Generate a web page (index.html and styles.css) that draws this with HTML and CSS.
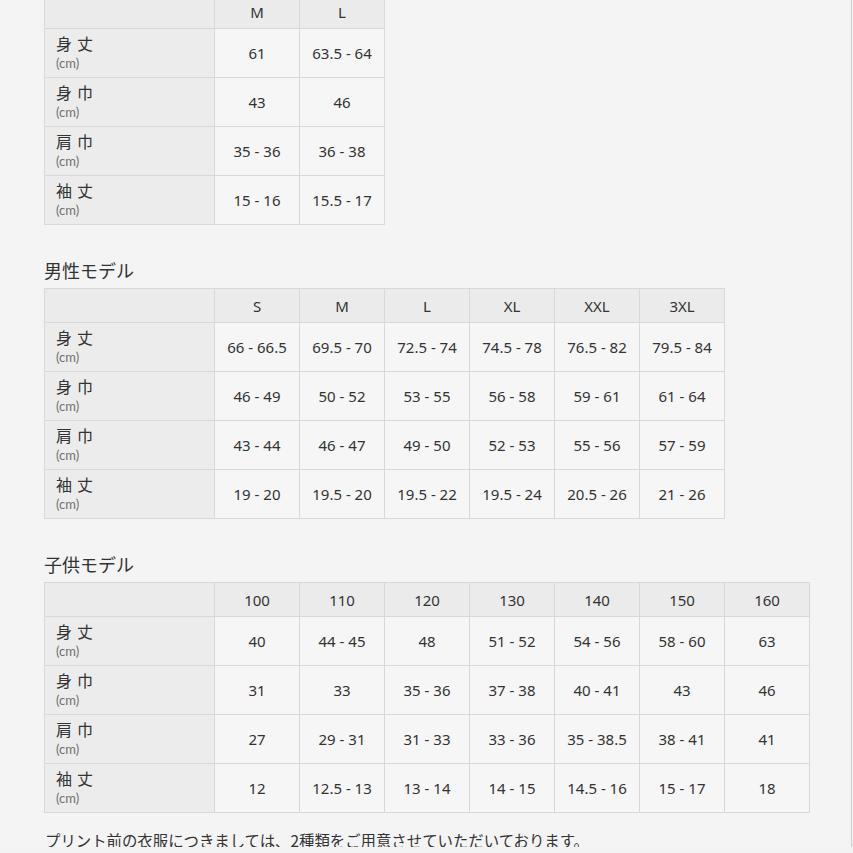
FILE: index.html
```html
<!DOCTYPE html>
<html lang="ja">
<head>
<meta charset="utf-8">
<link rel="stylesheet" href="styles.css">
</head>
<body>
<div class="page">
  <section class="sec sec-first">
    <div class="grid cols-2">
      <div class="hd"></div><div class="hd">M</div><div class="hd">L</div>
      <div class="lb"><span class="jp">身 丈</span><span class="cm">(cm)</span></div><div class="c">61</div><div class="c">63.5 - 64</div>
      <div class="lb"><span class="jp">身 巾</span><span class="cm">(cm)</span></div><div class="c">43</div><div class="c">46</div>
      <div class="lb"><span class="jp">肩 巾</span><span class="cm">(cm)</span></div><div class="c">35 - 36</div><div class="c">36 - 38</div>
      <div class="lb"><span class="jp">袖 丈</span><span class="cm">(cm)</span></div><div class="c">15 - 16</div><div class="c">15.5 - 17</div>
    </div>
  </section>

  <section class="sec">
    <h2 class="title">男性モデル</h2>
    <div class="grid cols-6">
      <div class="hd"></div><div class="hd">S</div><div class="hd">M</div><div class="hd">L</div><div class="hd">XL</div><div class="hd">XXL</div><div class="hd">3XL</div>
      <div class="lb"><span class="jp">身 丈</span><span class="cm">(cm)</span></div><div class="c">66 - 66.5</div><div class="c">69.5 - 70</div><div class="c">72.5 - 74</div><div class="c">74.5 - 78</div><div class="c">76.5 - 82</div><div class="c">79.5 - 84</div>
      <div class="lb"><span class="jp">身 巾</span><span class="cm">(cm)</span></div><div class="c">46 - 49</div><div class="c">50 - 52</div><div class="c">53 - 55</div><div class="c">56 - 58</div><div class="c">59 - 61</div><div class="c">61 - 64</div>
      <div class="lb"><span class="jp">肩 巾</span><span class="cm">(cm)</span></div><div class="c">43 - 44</div><div class="c">46 - 47</div><div class="c">49 - 50</div><div class="c">52 - 53</div><div class="c">55 - 56</div><div class="c">57 - 59</div>
      <div class="lb"><span class="jp">袖 丈</span><span class="cm">(cm)</span></div><div class="c">19 - 20</div><div class="c">19.5 - 20</div><div class="c">19.5 - 22</div><div class="c">19.5 - 24</div><div class="c">20.5 - 26</div><div class="c">21 - 26</div>
    </div>
  </section>

  <section class="sec">
    <h2 class="title">子供モデル</h2>
    <div class="grid cols-7">
      <div class="hd"></div><div class="hd">100</div><div class="hd">110</div><div class="hd">120</div><div class="hd">130</div><div class="hd">140</div><div class="hd">150</div><div class="hd">160</div>
      <div class="lb"><span class="jp">身 丈</span><span class="cm">(cm)</span></div><div class="c">40</div><div class="c">44 - 45</div><div class="c">48</div><div class="c">51 - 52</div><div class="c">54 - 56</div><div class="c">58 - 60</div><div class="c">63</div>
      <div class="lb"><span class="jp">身 巾</span><span class="cm">(cm)</span></div><div class="c">31</div><div class="c">33</div><div class="c">35 - 36</div><div class="c">37 - 38</div><div class="c">40 - 41</div><div class="c">43</div><div class="c">46</div>
      <div class="lb"><span class="jp">肩 巾</span><span class="cm">(cm)</span></div><div class="c">27</div><div class="c">29 - 31</div><div class="c">31 - 33</div><div class="c">33 - 36</div><div class="c">35 - 38.5</div><div class="c">38 - 41</div><div class="c">41</div>
      <div class="lb"><span class="jp">袖 丈</span><span class="cm">(cm)</span></div><div class="c">12</div><div class="c">12.5 - 13</div><div class="c">13 - 14</div><div class="c">14 - 15</div><div class="c">14.5 - 16</div><div class="c">15 - 17</div><div class="c">18</div>
    </div>
  </section>

  <p class="note">プリント前の衣服につきましては、2種類をご用意させていただいております。</p>
</div>
</body>
</html>
```

FILE: styles.css
```css
html, body {
  margin: 0;
  padding: 0;
  background: #f3f3f3;
  overflow: hidden;
}

body {
  font-family: "Noto Sans CJK JP", "Noto Sans", sans-serif;
  color: #333333;
}

.page {
  box-sizing: border-box;
  width: 852px;
  height: 853px;
  padding-left: 44px;
  border-right: 1px solid #cfcfcf;
  background: #f4f4f4;
}

.sec {
  margin-top: 33px;
}

.sec-first {
  margin-top: -6px;
}

.title {
  margin: 0 0 6px 0;
  font-size: 18px;
  line-height: 24px;
  font-weight: 400;
  color: #333333;
}

.grid {
  display: inline-grid;
  gap: 1px;
  padding: 1px;
  background: #d8d8d8;
  grid-template-rows: 33px;
  grid-auto-rows: 48px;
  vertical-align: top;
}

.cols-2 { grid-template-columns: 169px repeat(2, 84px); }
.cols-6 { grid-template-columns: 169px repeat(6, 84px); }
.cols-7 { grid-template-columns: 169px repeat(7, 84px); }

.hd {
  background: #ebebeb;
  display: flex;
  align-items: center;
  justify-content: center;
  font-family: "Noto Sans", "Open Sans", sans-serif;
  font-size: 15px;
  color: #333333;
}

.lb {
  background: #ececec;
  display: flex;
  flex-direction: column;
  justify-content: center;
  padding-left: 11px;
  padding-bottom: 3px;
}

.jp {
  font-size: 16px;
  line-height: 23px;
  word-spacing: 1.5px;
  color: #333333;
}

.cm {
  font-family: Lato, "Noto Sans", sans-serif;
  font-size: 13px;
  line-height: 16px;
  color: #707070;
}

.c {
  background: #f6f6f6;
  display: flex;
  align-items: center;
  justify-content: center;
  font-family: "Noto Sans", "Open Sans", sans-serif;
  font-size: 15px;
  color: #333333;
  white-space: nowrap;
}

.note {
  margin: 16px 0 0 1px;
  font-size: 15.4px;
  line-height: 22px;
  color: #333333;
}
```
